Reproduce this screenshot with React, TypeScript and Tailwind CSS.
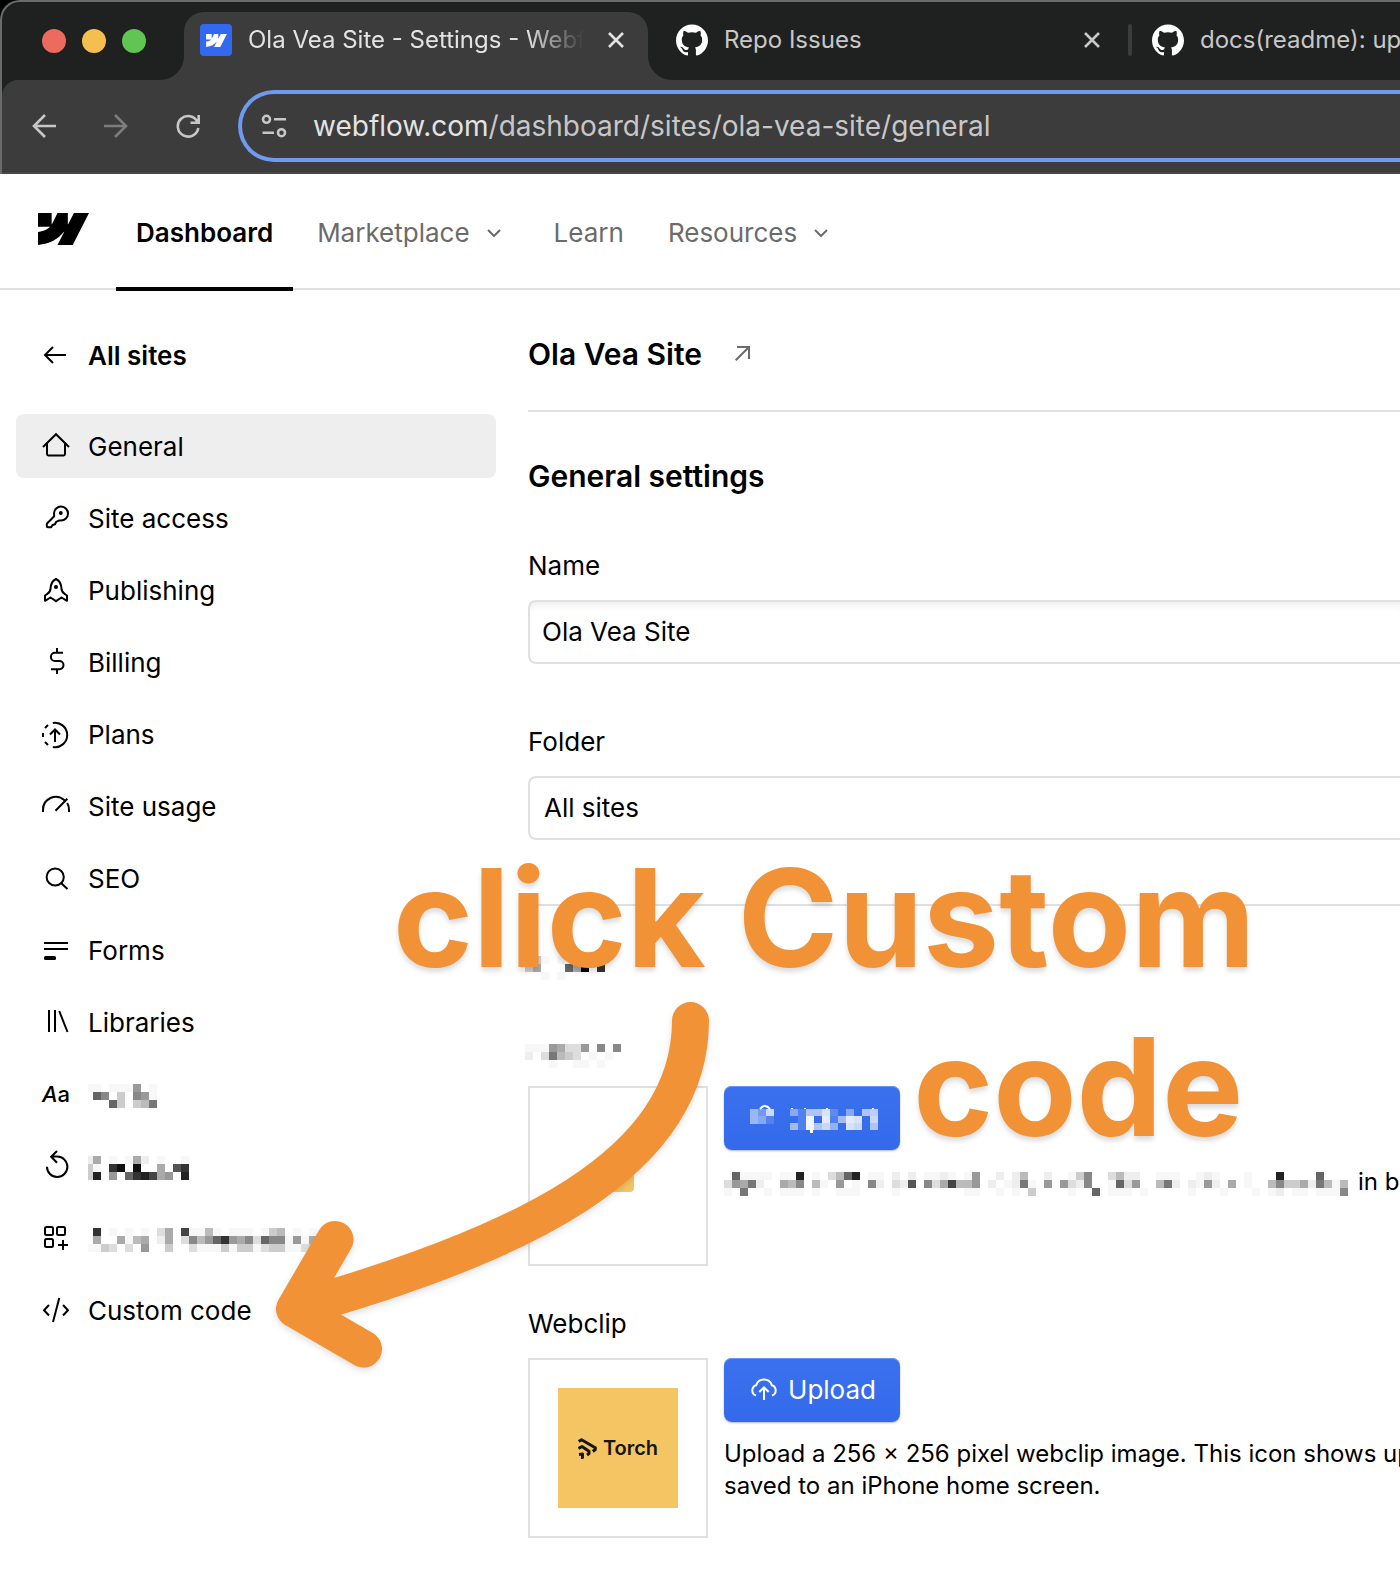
import type { ReactNode } from "react";

const W_PATH =
  "m24 4.515-7.658 14.97H9.149l3.205-6.204h-.144C9.566 16.713 5.621 18.973 0 19.485v-6.118s3.596-.213 5.71-2.435H0V4.515h6.417v5.278l.144-.001 2.622-5.277h4.854v5.244h.144l2.72-5.244H24Z";

const GITHUB_PATH =
  "M12 .297c-6.63 0-12 5.373-12 12 0 5.303 3.438 9.8 8.205 11.385.6.113.82-.258.82-.577 0-.285-.01-1.04-.015-2.04-3.338.724-4.042-1.61-4.042-1.61C4.422 18.07 3.633 17.7 3.633 17.7c-1.087-.744.084-.729.084-.729 1.205.084 1.838 1.236 1.838 1.236 1.07 1.835 2.809 1.305 3.495.998.108-.776.417-1.305.76-1.605-2.665-.3-5.466-1.332-5.466-5.93 0-1.31.465-2.38 1.235-3.22-.135-.303-.54-1.523.105-3.176 0 0 1.005-.322 3.3 1.23.96-.267 1.98-.399 3-.405 1.02.006 2.04.138 3 .405 2.28-1.552 3.285-1.23 3.285-1.23.645 1.653.24 2.873.12 3.176.765.84 1.23 1.91 1.23 3.22 0 4.61-2.805 5.625-5.475 5.92.42.36.81 1.096.81 2.22 0 1.606-.015 2.896-.015 3.286 0 .315.21.69.825.57C20.565 22.092 24 17.592 24 12.297c0-6.627-5.373-12-12-12";

function GithubMark() {
  return (
    <svg viewBox="0 0 24 24" className="size-8 shrink-0 fill-white" aria-hidden="true">
      <path d={GITHUB_PATH} />
    </svg>
  );
}

function CloseIcon() {
  return (
    <svg viewBox="0 0 16 16" className="size-4" fill="none" stroke="currentColor" strokeWidth="2.6" aria-hidden="true">
      <path d="M1 1 15 15M15 1 1 15" />
    </svg>
  );
}

/* Pixelated block of hidden text: one hex digit per 8px cell, "." is empty. */
function Mosaic({ rows, clip = 0 }: { rows: string[]; clip?: number }) {
  const width = Math.max(...rows.map((r) => r.length)) * 8 - clip;
  const height = rows.length * 8;
  return (
    <svg
      width={width}
      height={height}
      viewBox={`${clip} 0 ${width} ${height}`}
      shapeRendering="crispEdges"
      className="shrink-0"
      aria-hidden="true"
    >
      {rows.flatMap((row, y) =>
        row.split("").map((c, x) => {
          if (c === ".") return null;
          const v = c === "f" ? 247 : parseInt(c, 16) * 17;
          return <rect key={`${x}-${y}`} x={x * 8} y={y * 8} width="8" height="8" fill={`rgb(${v},${v},${v})`} />;
        })
      )}
    </svg>
  );
}

function LineIcon({ children }: { children: ReactNode }) {
  return (
    <svg viewBox="0 0 28 28" className="size-7 shrink-0 overflow-visible" fill="none" stroke="currentColor" strokeWidth="2" aria-hidden="true">
      {children}
    </svg>
  );
}

type Item = { icon: ReactNode; label?: string; rows?: string[]; active?: boolean; aria?: string };

const ITEMS: Item[] = [
  {
    label: "General",
    active: true,
    icon: (
      <LineIcon>
        <path d="M1 15 14 2.2 27 15M5 11.5V22a1.4 1.4 0 0 0 1.4 1.4h15.2A1.4 1.4 0 0 0 23 22V11.5" />
      </LineIcon>
    ),
  },
  {
    label: "Site access",
    icon: (
      <LineIcon>
        <path d="M12.2 12.2 5.3 19.2Q4.8 19.8 4.8 20.5V22a1.2 1.2 0 0 0 1.2 1.2h3.2L10.5 21 13 20.2l1.2-2.4 2.6-1.2H19A7 7 0 1 0 12 9.3Z" strokeLinejoin="round" />
        <circle cx="18.8" cy="9" r="1.9" fill="currentColor" stroke="none" />
      </LineIcon>
    ),
  },
  {
    label: "Publishing",
    icon: (
      <LineIcon>
        <path d="M14 3C10.500 4.500 8.500 9 8.400 13.500Q8 16.500 3 19.500V24.800L8.500 21.500 14 25.200 19.500 21.500 25 24.800V19.500Q20 16.500 19.600 13.500C19.500 9 17.500 4.500 14 3Z" strokeLinejoin="round" />
        <circle cx="14" cy="11" r="2" fill="currentColor" stroke="none" />
      </LineIcon>
    ),
  },
  {
    label: "Billing",
    icon: (
      <LineIcon>
        <path d="M21 4.800H13a4.100 4.100 0 0 0 0 8.200h4.400a4.100 4.100 0 0 1 0 8.200H9M15 0v5M15 21v5" />
      </LineIcon>
    ),
  },
  {
    label: "Plans",
    icon: (
      <LineIcon>
        <path d="M10.800 3A12.200 12.200 0 1 1 10.800 27M3 8 6 5M1 17V13M3 22 6 25M13 22V9.500M8 14.500 13 9.500 18 14.500" />
      </LineIcon>
    ),
  },
  {
    label: "Site usage",
    icon: (
      <LineIcon>
        <path d="M1 20V18A12.800 12.800 0 0 1 22.500 8.300M13.500 18.800 25.300 6.800M25.200 11Q27 14 27 18V20" />
      </LineIcon>
    ),
  },
  {
    label: "SEO",
    icon: (
      <LineIcon>
        <circle cx="13.200" cy="13" r="8.600" />
        <path d="M19 19 25.500 25" />
      </LineIcon>
    ),
  },
  {
    label: "Forms",
    icon: (
      <LineIcon>
        <path d="M2 7H26M2 13H26" />
        <rect x="2" y="20" width="12" height="4" rx="1.500" fill="currentColor" stroke="none" />
      </LineIcon>
    ),
  },
  {
    label: "Libraries",
    icon: (
      <LineIcon>
        <path d="M7 2V24M13 2V24M17.200 3 25.500 24" />
      </LineIcon>
    ),
  },
  {
    aria: "Fonts",
    rows: ["ff.fff9.f", ".68.c.89f", "...6c.cb7"],
    icon: (
      <span className="flex w-7 shrink-0 justify-center text-[22px] leading-7 font-medium">
        <i>A</i>a
      </span>
    ),
  },
  {
    aria: "Backups",
    rows: ["ea.f.fae.f..f", "cf.31.1..a.53", "c2.9.6324a9.2"],
    icon: (
      <LineIcon>
        <path d="M5 14.700A10.200 10.200 0 1 0 15.200 4.600H9M15 -1 9.200 4.800 15 10.800" />
      </LineIcon>
    ),
  },
  {
    aria: "Apps",
    rows: [".3.f.f.f.da.4ffbf.fff.fcb.f.f.", ".a..afba.ea.d8b9639a8d688f9fa9", "ffcd.d.9..c..dfffcfccfdccffdca"],
    icon: (
      <LineIcon>
        <rect x="3" y="3" width="8" height="8" rx="1.500" />
        <rect x="15" y="3" width="8" height="8" rx="1.500" />
        <rect x="3" y="15" width="8" height="8" rx="1.500" />
        <path d="M21 16V26M16 21H26" />
      </LineIcon>
    ),
  },
  {
    label: "Custom code",
    icon: (
      <LineIcon>
        <path d="M7 9 2 14.200 7 19.500M21 9 26 14.200 21 19.500M17.300 2 11 26" />
      </LineIcon>
    ),
  },
];

function BrowserChrome() {
  return (
    <div className="bg-black">
      <header className="overflow-hidden rounded-tl-[20px] border-t-2 border-l-2 border-[#6a6b6b] bg-[#1f2120] text-[24px]">
        <div className="flex h-[78px] items-end overflow-hidden whitespace-nowrap">
          <div className="flex h-[78px] shrink-0 items-center gap-4 pr-[38px] pl-10">
            <span className="size-6 rounded-full bg-[#ed6a5e]" />
            <span className="size-6 rounded-full bg-[#f5bf4f]" />
            <span className="size-6 rounded-full bg-[#61c554]" />
          </div>
          <div className="relative flex h-[68px] w-[464px] shrink-0 items-center rounded-t-[20px] bg-[#3c3c3c] px-4 pb-3 text-[#e3e3e3]">
            <svg viewBox="0 0 24 24" className="absolute bottom-0 -left-6 size-6 fill-[#3c3c3c]" aria-hidden="true">
              <path d="M0 24H24V0A24 24 0 0 1 0 24Z" />
            </svg>
            <svg viewBox="0 0 24 24" className="absolute -right-6 bottom-0 size-6 fill-[#3c3c3c]" aria-hidden="true">
              <path d="M24 24H0V0A24 24 0 0 0 24 24Z" />
            </svg>
            <span className="mr-4 flex size-8 shrink-0 items-center justify-center rounded bg-[#3368f0]">
              <svg viewBox="0 4.5 24 15" className="h-[13px] w-[21px] fill-white" aria-hidden="true">
                <path d={W_PATH} />
              </svg>
            </span>
            <span className="min-w-0 flex-1 [mask-image:linear-gradient(to_right,black_83%,transparent)]">
              Ola Vea Site - Settings - Webf
            </span>
            <button aria-label="Close tab" className="ml-4 flex size-8 shrink-0 items-center justify-center">
              <CloseIcon />
            </button>
          </div>
          <div className="flex h-[68px] w-[480px] shrink-0 items-center pr-5 pb-3 pl-7 text-[#c7c7c7]">
            <GithubMark />
            <span className="ml-4 flex-1">Repo Issues</span>
            <button aria-label="Close tab" className="flex size-8 items-center justify-center">
              <CloseIcon />
            </button>
          </div>
          <div className="flex h-[68px] shrink-0 items-center pb-3 text-[#c7c7c7]">
            <span className="mr-5 h-8 w-1 rounded-sm bg-[#3c3c3c]" />
            <GithubMark />
            <span className="ml-4">docs(readme): up</span>
          </div>
        </div>
        <div className="flex items-center rounded-tl-2xl border-b-2 border-[#484848] bg-[#3c3c3c] pt-[10px] pb-[10px] pl-[30px]">
          <div className="flex gap-12 text-[#c7c7c7]">
            <button aria-label="Back">
              <svg viewBox="0 0 24 24" className="size-6" fill="none" stroke="currentColor" strokeWidth="2.600" aria-hidden="true">
                <path d="M24 12H2M13 1 2 12 13 23" />
              </svg>
            </button>
            <button aria-label="Forward" className="text-[#7d7d7d]">
              <svg viewBox="0 0 24 24" className="size-6" fill="none" stroke="currentColor" strokeWidth="2.600" aria-hidden="true">
                <path d="M0 12H22M11 1 22 12 11 23" />
              </svg>
            </button>
            <button aria-label="Reload">
              <svg viewBox="0 0 24 24" className="size-6" fill="none" stroke="currentColor" strokeWidth="2.600" aria-hidden="true">
                <path d="M21.500 8A10.300 10.300 0 1 0 22.300 14M22.700 1V8.800H14.500" />
              </svg>
            </button>
          </div>
          <div className="ml-[38px] flex h-[72px] flex-1 items-center gap-[26px] rounded-l-full border-4 border-r-0 border-[#7099f0] pl-[19px]">
            <svg viewBox="0 0 26 26" className="size-[26px]" fill="none" stroke="#c7c7c7" strokeWidth="2.600" aria-hidden="true">
              <circle cx="5.500" cy="6.300" r="3.500" />
              <path d="M13 6.300H25M1.500 19.700H13" />
              <circle cx="20.500" cy="19.700" r="3.500" />
            </svg>
            <div role="textbox" aria-label="Address" className="text-[28px] leading-8 text-[#c7c7c7]">
              <span className="text-[#e3e3e3]">webflow.com</span>/dashboard/sites/ola-vea-site/general
            </div>
          </div>
        </div>
      </header>
    </div>
  );
}

function Chevron() {
  return (
    <svg viewBox="0 0 14 8" className="ml-[17px] h-2 w-[14px]" fill="none" stroke="currentColor" strokeWidth="2" aria-hidden="true">
      <path d="M1 1 7 7 13 1" />
    </svg>
  );
}

function NavBar() {
  return (
    <nav className="flex h-[116px] items-stretch border-b-2 border-[#e0e0e0] text-[26px] leading-8 text-[#6b6b6b]">
      <a href="#" aria-label="Webflow" className="mr-[27px] ml-[38px] flex items-center pb-1">
        <svg viewBox="0 4.5 24 15" className="h-8 w-[51px] fill-black" aria-hidden="true">
          <path d={W_PATH} />
        </svg>
      </a>
      <a href="#" className="relative flex items-center px-5 pt-1 font-semibold text-black">
        Dashboard
        <span className="absolute inset-x-0 -bottom-[3px] h-1 bg-black" />
      </a>
      <button className="ml-6 flex items-center pt-1">
        Marketplace
        <Chevron />
      </button>
      <a href="#" className="ml-[53px] flex items-center pt-1">
        Learn
      </a>
      <button className="ml-11 flex items-center pt-1">
        Resources
        <Chevron />
      </button>
    </nav>
  );
}

function Sidebar() {
  return (
    <aside className="w-[512px] shrink-0 px-4 pt-[34px]">
      <a href="#" className="mb-[26px] flex h-16 items-center gap-[18px] pl-[26px] font-semibold">
        <LineIcon>
          <path d="M24 13H3M11 5 3 13 11 21" />
        </LineIcon>
        All sites
      </a>
      <ul className="flex flex-col gap-2">
        {ITEMS.map((item) => (
          <li key={item.label ?? item.aria} className="w-[480px]">
            <a
              href="#"
              aria-label={item.aria}
              className={
                item.active
                  ? "flex h-16 items-center gap-[18px] rounded-lg bg-[#eeeeee] pl-[26px]"
                  : "flex h-16 items-center gap-[18px] rounded-lg pl-[26px]"
              }
            >
              {item.icon}
              {item.label ? (
                <span className="pt-0.5">{item.label}</span>
              ) : (
                <span className="pt-1">
                  <Mosaic rows={item.rows ?? []} clip={3} />
                </span>
              )}
            </a>
          </li>
        ))}
      </ul>
    </aside>
  );
}

const BUTTON =
  "flex h-16 w-44 items-center justify-center gap-[11px] rounded-lg bg-linear-to-b from-[#3b71ee] to-[#336aea] pl-[3px] text-white shadow-[inset_0_1px_0_#6a93f2,0_1px_2px_rgba(0,0,0,0.3)]";

/* Opacity of the white cells over the button, one hex digit each. */
const HIDDEN_LABEL: [string, number][] = [
  ["6299c3.6.9a", 0],
  [".2e.d28dc.b", 7],
  ["82e9b7.cb.9", 14],
];

function ScrambledUpload() {
  return (
    <svg width="128" height="30" viewBox="0 0 128 30" shapeRendering="crispEdges" fill="#ffffff" aria-hidden="true">
      <path d="M10 6Q15 0 20 6" fill="none" stroke="#ffffff" strokeWidth="2" shapeRendering="auto" />
      {[0.5, 0.3, 0.75].map((o, i) => (
        <rect key={i} x={i * 8} y="6" width="8" height="7" opacity={o} />
      ))}
      {[0.5, 0.4, 0.15].map((o, i) => (
        <rect key={i} x={i * 8} y="13" width="8" height="8" opacity={o} />
      ))}
      {HIDDEN_LABEL.map(([row, y]) =>
        row.split("").map((c, i) =>
          c === "." ? null : <rect key={`${y}-${i}`} x={40 + i * 8} y={6 + y} width="8" height="7" opacity={parseInt(c, 16) / 15} />
        )
      )}
      <path d="M41 5h2v1h-2zM54 5h2v1h-2zM76 5h2v1h-2zM122 5h2v1h-2zM60 27h3v3h-3z" />
    </svg>
  );
}

function TorchLogo() {
  return (
    <div className="flex size-[120px] items-center justify-center gap-[6px] bg-[#f5c564] text-[#16180f]">
      <svg viewBox="0 0 19 21" className="h-[21px] w-[19px]" fill="none" stroke="currentColor" strokeWidth="3" strokeLinejoin="round" aria-hidden="true">
        <path d="M.8 3.600 3.500 1.800 17.300 9.700V11.500L14.800 13.500" />
        <path d="M.5 10.500 4 8.500 11 13.200V15.500L9 17" />
        <path d="M1 16.500 4.500 16V19.500H3" />
      </svg>
      <span className="text-[20px] leading-6 font-semibold">Torch</span>
    </div>
  );
}

const HIDDEN_HINT = [
  ".6ffff.ff2.f.db62.ff.e.e.ffef.f9..e.eb..e..fc8..dbee..fff..fef...f...2....6...",
  "d9a7e..ab8.bf.9.f.8e.de5.8da4bb9.e.fe7f.9.9de8..f6d9..b7e.ef9e.a.f..b8ccae7bfb",
  "f.7..f.fff.f..fff....f........ff..f.f.c....f..6.fff.f.....f...f...f.fe.ff.fff8",
];

function Settings() {
  return (
    <main className="min-w-0 flex-1 pl-4">
      <div className="flex h-[122px] items-center border-b-2 border-[#e0e0e0] pt-2">
        <h1 className="text-[30px] leading-10 font-semibold">Ola Vea Site</h1>
        <a href="#" aria-label="Open site" className="ml-[33px] pb-0.5">
          <svg viewBox="0 0 15 15" className="size-[15px]" fill="none" stroke="#6b6b6b" strokeWidth="2" aria-hidden="true">
            <path d="M2 1H14V13M14 1 .7 14.300" />
          </svg>
        </a>
      </div>
      <h2 className="mt-11 text-[30px] leading-10 font-semibold">General settings</h2>
      <label htmlFor="name" className="mt-[54px] mb-[18px] block">
        Name
      </label>
      <input
        id="name"
        defaultValue="Ola Vea Site"
        className="block h-16 w-full rounded-l-lg border-2 border-r-0 border-[#e0e0e0] bg-white pb-0.5 pl-3 shadow-[inset_0_8px_8px_-6px_rgba(0,0,0,0.09)]"
      />
      <label htmlFor="folder" className="mt-[62px] mb-[18px] block">
        Folder
      </label>
      <select id="folder" className="block h-16 w-full appearance-none rounded-l-lg border-2 border-r-0 border-[#e0e0e0] bg-white pl-[14px]">
        <option>All sites</option>
      </select>
      <hr className="mt-16 mb-[50px] border-t-2 border-[#e0e0e0]" />
      <div className="mb-[18px] -ml-[3px] flex flex-col gap-16">
        <Mosaic rows={[".cf.f.....", "ca...6a0.3", "..f.f....."]} />
        <Mosaic rows={["fff9add9.8.8", "e.d7bcd.f.f.", "...f..ff.f.."]} />
      </div>
      <div className="flex gap-4">
        <div className="flex size-[180px] shrink-0 items-center justify-center border-2 border-[#e0e0e0]">
          <span className="size-8 rounded bg-[#f5c564]" />
        </div>
        <div className="min-w-0 flex-1">
          <button aria-label="Upload" className={BUTTON}>
            <ScrambledUpload />
          </button>
          <div className="mt-4 flex items-center gap-[10px] text-[24px] leading-8 whitespace-nowrap">
            <span className="pt-1">
              <Mosaic rows={HIDDEN_HINT} />
            </span>
            <span>in b</span>
          </div>
        </div>
      </div>
      <h3 className="mt-[42px] mb-[18px]">Webclip</h3>
      <div className="flex gap-4">
        <div className="flex size-[180px] shrink-0 items-center justify-center border-2 border-[#e0e0e0]">
          <TorchLogo />
        </div>
        <div className="min-w-0 flex-1">
          <button className={BUTTON}>
            <svg viewBox="0 0 26 26" className="size-[26px]" fill="none" stroke="currentColor" strokeWidth="2" aria-hidden="true">
              <path d="M5 18.500A5.400 5.400 0 0 1 5.200 8.200A8.200 8.200 0 0 1 20.800 8.200A5.400 5.400 0 0 1 21 18.500M13 23V10.500M8.300 15 13 10.300 17.700 15" />
            </svg>
            Upload
          </button>
          <p className="mt-4 text-[24px] leading-8 whitespace-nowrap">
            Upload a 256 × 256 pixel webclip image. This icon shows up
            <br />
            saved to an iPhone home screen.
          </p>
        </div>
      </div>
    </main>
  );
}

function Annotation() {
  return (
    <div className="pointer-events-none text-[#f19236]">
      <p className="absolute top-[833px] left-[393px] text-right text-[136px] leading-[169px] font-bold whitespace-nowrap [text-shadow:0_4px_5px_rgba(0,0,0,0.14)]">
        click Custom
        <br />
        <span className="pr-3">code</span>
      </p>
      <svg
        viewBox="276 1000 436 370"
        className="absolute top-[1000px] left-[276px] h-[370px] w-[436px] overflow-visible drop-shadow-[0_3px_3px_rgba(0,0,0,0.12)]"
        fill="none"
        stroke="currentColor"
        strokeWidth="37"
        strokeLinecap="round"
        strokeLinejoin="round"
        aria-hidden="true"
      >
        <path d="M690.500 1020.500C690.500 1165 520 1245 294.500 1309M335 1239.500 294.500 1309 363.500 1349" />
      </svg>
    </div>
  );
}

export default function App() {
  return (
    <div className="relative min-h-screen overflow-hidden bg-white font-['Inter',sans-serif] text-[26px] leading-8 text-black">
      <BrowserChrome />
      <NavBar />
      <div className="flex">
        <Sidebar />
        <Settings />
      </div>
      <Annotation />
    </div>
  );
}
